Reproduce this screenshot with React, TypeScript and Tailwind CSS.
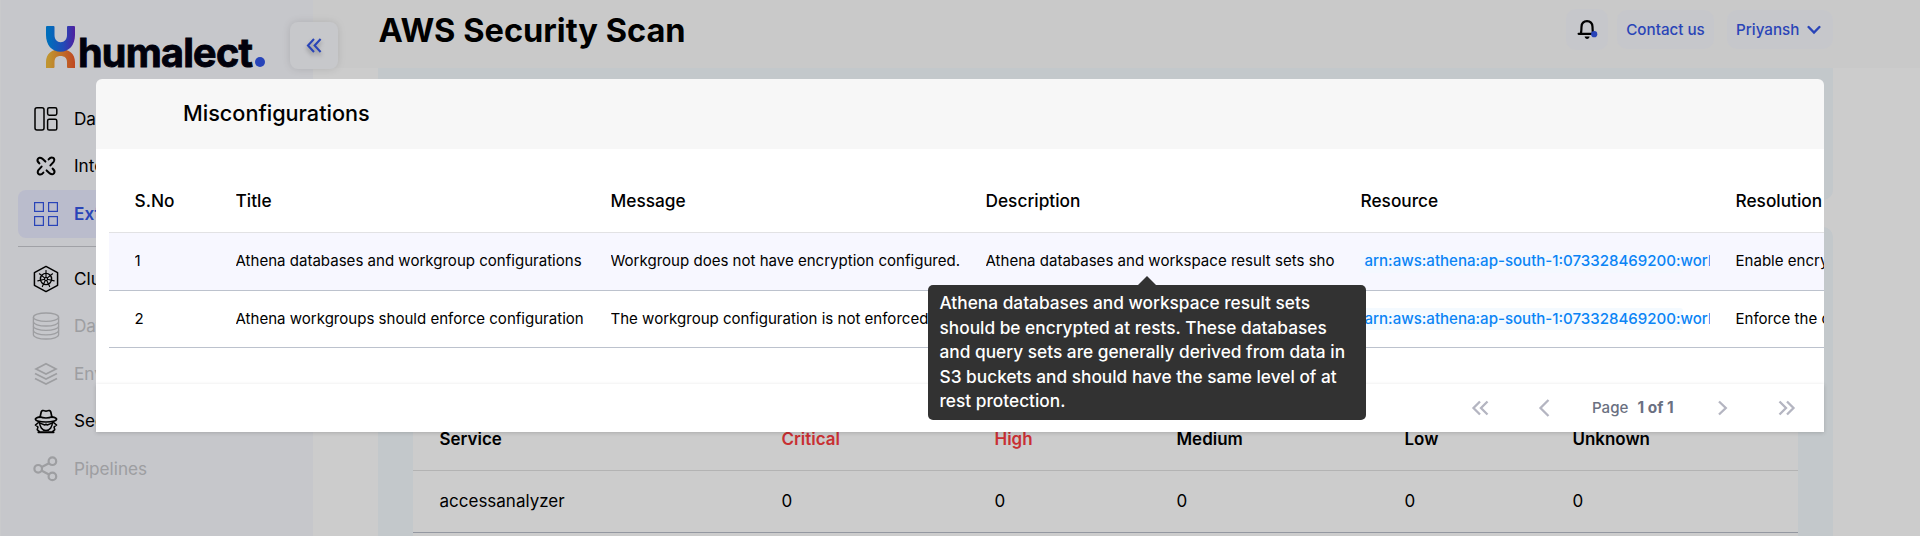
import type { ReactNode } from 'react';

type NavItem = { label: string; tone: string; icon: ReactNode };

const DashboardIcon = () => (
  <svg width="28" height="28" viewBox="0 0 28 28" fill="none" stroke="#000" strokeWidth="1.5">
    <rect x="3" y="2.8" width="9" height="22.2" rx="2" />
    <rect x="15.6" y="2.8" width="9.2" height="7.4" rx="1.6" />
    <rect x="15.6" y="14.2" width="9.2" height="10.8" rx="1.6" />
  </svg>
);

const HOOK = 'M-6.6 -2.6C-10.6 -5.8 -7.4 -10.2 -3.8 -7.4L-0.6 -4.4';
const IntegrationIcon = () => (
  <svg width="28" height="28" viewBox="-14 -14 28 28" fill="none" stroke="#000" strokeWidth="2" strokeLinecap="round">
    <path d={HOOK} />
    <path d={HOOK} transform="rotate(90)" />
    <path d={HOOK} transform="rotate(180)" />
    <path d={HOOK} transform="rotate(270)" />
  </svg>
);

const ExtensionIcon = () => (
  <svg width="28" height="28" viewBox="0 0 28 28" fill="none" stroke="#3456e6" strokeWidth="1.2">
    <rect x="2.6" y="2.6" width="8.8" height="8.8" />
    <rect x="16.6" y="2.6" width="8.8" height="8.8" />
    <rect x="2.6" y="16.6" width="8.8" height="8.8" />
    <rect x="16.6" y="16.6" width="8.8" height="8.8" />
  </svg>
);

const ClusterIcon = () => (
  <svg width="30" height="30" viewBox="-15 -15 30 30" fill="none" stroke="#000">
    <path strokeWidth="1.6" strokeLinejoin="round" d="M0 -13.5L12.4 -6.8V6.8L0 13.5L-12.4 6.8V-6.8Z" />
    <circle r="6" strokeWidth="1.5" />
    <circle r="1.8" strokeWidth="1" />
    <g strokeWidth="1.2" strokeLinecap="round">
      <path d="M0 -1.5V-9" />
      <path d="M0 -1.5V-9" transform="rotate(51.4)" />
      <path d="M0 -1.5V-9" transform="rotate(102.9)" />
      <path d="M0 -1.5V-9" transform="rotate(154.3)" />
      <path d="M0 -1.5V-9" transform="rotate(205.7)" />
      <path d="M0 -1.5V-9" transform="rotate(257.1)" />
      <path d="M0 -1.5V-9" transform="rotate(308.6)" />
    </g>
  </svg>
);

const DatabaseIcon = () => (
  <svg width="28" height="28" viewBox="0 0 28 28" fill="none" stroke="#c5c6ca" strokeWidth="1.3">
    <ellipse cx="14" cy="5.2" rx="12.6" ry="4.2" />
    <path d="M1.4 5.2V22.8C1.4 25.1 7 27 14 27S26.6 25.1 26.6 22.8V5.2" />
    <path d="M1.4 9.8C1.4 12.1 7 14 14 14S26.6 12.1 26.6 9.8" />
    <path d="M1.4 14.2C1.4 16.5 7 18.4 14 18.4S26.6 16.5 26.6 14.2" />
    <path d="M1.4 18.6C1.4 20.9 7 22.8 14 22.8S26.6 20.9 26.6 18.6" />
  </svg>
);

const LayersIcon = () => (
  <svg width="28" height="28" viewBox="0 0 28 28" fill="none" stroke="#c5c6ca" strokeWidth="1.7">
    <path d="M14 3.8L24 8.9L14 14L4 8.9Z" />
    <path d="M3 13.4L14 19L25 13.4" />
    <path d="M3 18.4L14 24L25 18.4" />
  </svg>
);

const SpyIcon = () => (
  <svg width="28" height="28" viewBox="0 0 28 28" fill="none" stroke="#000" strokeWidth="1.7" strokeLinejoin="round" strokeLinecap="round">
    <path d="M8 10.4L9.2 5C9.6 3.4 11 3.2 12.4 3.8C13.4 4.2 14.6 4.2 15.6 3.8C17 3.2 18.4 3.4 18.8 5L20 10.4" />
    <path d="M8 9.8C4.8 10.4 3.2 11.3 3.4 12.3C3.8 13.8 8.4 15 14 15S24.2 13.8 24.6 12.3C24.8 11.3 23.2 10.4 20 9.8C17 11.4 11 11.4 8 9.8Z" />
    <path strokeWidth="1.5" d="M7.6 14.8C7.4 19.5 10.2 23.6 14 23.6S20.6 19.5 20.4 14.8" />
    <path strokeWidth="1.5" d="M8.6 16.4L12.8 18L14 17.2L15.2 18L19.4 16.4" />
    <path strokeWidth="1.5" d="M6.4 15.6L3.4 18L6 20L5.2 22.6L7.4 24.6M21.6 15.6L24.6 18L22 20L22.8 22.6L20.6 24.6" />
    <path strokeWidth="1.9" d="M6.4 25.2H21.6" />
  </svg>
);

const PipelineIcon = () => (
  <svg width="28" height="28" viewBox="0 0 28 28" fill="none" stroke="#c5c6ca" strokeWidth="2.2">
    <circle cx="20.4" cy="6.2" r="3.8" />
    <circle cx="6.2" cy="13.8" r="3.8" />
    <circle cx="20.4" cy="21.4" r="3.8" />
    <path d="M9.8 12L17 8.2M9.8 15.7L17 19.5" />
  </svg>
);

const NAV_TOP: NavItem[] = [
  { label: 'Dashboard', tone: 'text-black', icon: <DashboardIcon /> },
  { label: 'Integrations', tone: 'text-black', icon: <IntegrationIcon /> },
  { label: 'Extensions', tone: 'bg-[#e9ebff] font-semibold text-[#3456e6]', icon: <ExtensionIcon /> },
];

const NAV_BOTTOM: NavItem[] = [
  { label: 'Clusters', tone: 'text-black', icon: <ClusterIcon /> },
  { label: 'Databases', tone: 'text-[#c5c6ca]', icon: <DatabaseIcon /> },
  { label: 'Environments', tone: 'text-[#c5c6ca]', icon: <LayersIcon /> },
  { label: 'Security', tone: 'text-black', icon: <SpyIcon /> },
  { label: 'Pipelines', tone: 'text-[#c5c6ca]', icon: <PipelineIcon /> },
];

const NavRow = ({ item }: { item: NavItem }) => (
  <li className={`flex h-[47.5px] items-center rounded-lg pl-[14px] text-[17.15px] ${item.tone}`}>
    <span className="flex w-[28px] justify-center">{item.icon}</span>
    <span className="ml-[14px]">{item.label}</span>
  </li>
);

const Logo = () => (
  <div className="flex h-[44px] items-start pl-[45px]">
    <svg className="mt-px" width="29" height="42" viewBox="0 0 29 42">
      <defs>
        <linearGradient id="top" x1="0" y1="0" x2="1" y2="0">
          <stop offset="0.1" stopColor="#0089ea" />
          <stop offset="0.6" stopColor="#2a5ee6" />
          <stop offset="1" stopColor="#6428c8" />
        </linearGradient>
        <linearGradient id="bottom" x1="0" y1="0" x2="1" y2="0">
          <stop offset="0.1" stopColor="#f0b93c" />
          <stop offset="1" stopColor="#ef5a2a" />
        </linearGradient>
      </defs>
      <path fill="url(#bottom)" d="M0 42V36C0 28 6 23 14.5 23S29 28 29 36V42Q29 42 28 42H22Q21 42 21 41V36C21 32 18.5 30 14.5 30S8.500 32 8.500 36V41Q8.500 42 7.500 42Z" />
      <path fill="url(#top)" d="M1 0H7.500Q8.500 0 8.500 1V9C8.500 13.500 11 16.200 14.700 16.200S21 13.500 21 9V1Q21 0 22 0H28Q29 0 29 1V9C29 19 23 25.800 14.500 25.800S0 19 0 9V1Q0 0 1 0Z" />
    </svg>
    <span className="ml-[3px] mt-[6px] text-[39.5px] font-bold leading-[44px] tracking-[-0.75px] text-[#02020f] [-webkit-text-stroke:0.9px_#02020f]">
      humalect
    </span>
    <span className="ml-[3px] mt-[32px] size-[10px] rounded-full bg-[#3156e8]" />
  </div>
);

const SERVICE_GRID = 'grid grid-cols-[342px_213px_182px_228px_168px_1fr] pl-[26.5px] items-center';

const COLS = 'grid grid-cols-[101px_375px_375px_375px_375px_375px] items-center';

const ROWS = [
  {
    title: 'Athena databases and workgroup configurations',
    message: 'Workgroup does not have encryption configured.',
    description: 'Athena databases and workspace result sets should be encrypted at rests.',
    resource: 'arn:aws:athena:ap-south-1:073328469200:workgroup/primary',
    resolution: 'Enable encryption at rest',
    tone: 'h-[58px] bg-[#f7f7ff]',
    mark: 'bg-[#f4f8ff]',
  },
  {
    title: 'Athena workgroups should enforce configuration',
    message: 'The workgroup configuration is not enforced.',
    description: 'Athena workgroup configuration should be enforced.',
    resource: 'arn:aws:athena:ap-south-1:073328469200:workgroup/primary',
    resolution: 'Enforce the configuration',
    tone: 'h-[57px] bg-white',
    mark: 'bg-[#f4faff]',
  },
];

const Cell = ({ children }: { children: ReactNode }) => (
  <div className="ml-[25.5px] overflow-hidden whitespace-nowrap">{children}</div>
);

const Chevron = ({ d, w }: { d: string; w: number }) => (
  <svg width={w} height="18" viewBox={`0 0 ${w} 18`} fill="none" stroke="#b4b5c1" strokeWidth="2.3">
    <path d={d} />
  </svg>
);

export default function App() {
  return (
    <div className="relative h-[536px] w-[1920px] overflow-hidden bg-white font-['Inter',sans-serif] text-black">
      <div className="flex h-full">
        <aside className="w-[313px] shrink-0 border-l border-[#fcfdff] bg-[#f8f9fe] pt-[25px]">
          <Logo />
          <ul className="ml-[17px] mr-[17px] mt-[26px]">
            {NAV_TOP.map((item) => (
              <NavRow key={item.label} item={item} />
            ))}
          </ul>
          <div className="ml-[17px] mr-[17px] mt-[8.500px] h-px bg-[#c9cad0]" />
          <ul className="ml-[17px] mr-[17px] mt-[8px]">
            {NAV_BOTTOM.map((item) => (
              <NavRow key={item.label} item={item} />
            ))}
          </ul>
        </aside>

        <main className="flex min-w-0 flex-1 flex-col">
          <header className="flex h-[68px] items-start bg-[#fcfcfc] pl-[65.500px] pr-[87px]">
            <h1 className="mt-[10px] text-[32.600px] font-bold leading-[40px]">AWS Security Scan</h1>
            <div className="ml-auto flex items-center pt-[9px] text-[15.200px] font-medium text-[#3456e6]">
              <span className="flex h-[41px] w-[42px] items-center justify-center rounded-[10px] bg-[#f8f9fe]">
                <svg width="22" height="24" viewBox="0 0 22 24" fill="none">
                  <path d="M2.600 15.800H19.400M4.800 15.600C5.600 13.500 5.300 11.400 5.500 8.800C5.700 5.200 8 3.200 11 3.200S16.300 5.200 16.500 8.800C16.700 11.400 16.400 13.500 17.200 15.600" stroke="#000" strokeWidth="2.200" strokeLinecap="round" />
                  <path d="M8.600 18.400H13.600C13.400 20 12.400 20.900 11.100 20.900S8.900 20 8.600 18.400Z" fill="#000" />
                  <circle cx="18.200" cy="16.200" r="3.100" fill="#3456e6" />
                </svg>
              </span>
              <span className="ml-[9px] flex h-[39px] w-[97px] items-center justify-center rounded-[10px] bg-[#f8f9fe] pt-[2px]">Contact us</span>
              <span className="ml-[13px] flex h-[39px] w-[106px] items-center rounded-[10px] bg-[#f8f9fe] pl-[9px] pt-[2px]">
                Priyansh
                <svg className="-mt-[2px] ml-[8px]" width="14" height="10" viewBox="0 0 14 10" fill="none" stroke="#3456e6" strokeWidth="2.400" strokeLinecap="round">
                  <path d="M1.600 2L7 7.600L12.400 2" />
                </svg>
              </span>
            </div>
          </header>
          <section className="ml-[65px] mr-[87px] h-[132px] rounded-b-[10px] bg-[#f4fafe]" />
          <section className="ml-[65px] mr-[87px] mt-[27px] flex-1 rounded-t-[10px] bg-[#f4fafe] px-[35px] pt-[35px]">
            <div className="h-full bg-white pt-[145px]">
              <div className={`h-[64px] border-b border-[#e0e0e0] pt-[3px] text-[16.950px] font-semibold ${SERVICE_GRID}`}>
                <span>Service</span>
                <span className="text-[#fa3b40]">Critical</span>
                <span className="text-[#fa3b40]">High</span>
                <span>Medium</span>
                <span>Low</span>
                <span>Unknown</span>
              </div>
              <div className={`h-[62px] border-b border-[#b9bfca] text-[17px] ${SERVICE_GRID}`}>
                <span>accessanalyzer</span>
                <span>0</span>
                <span>0</span>
                <span>0</span>
                <span>0</span>
                <span>0</span>
              </div>
            </div>
          </section>
        </main>
      </div>

      <button className="absolute left-[290px] top-[22px] flex h-[47px] w-[48px] items-center justify-center rounded-lg bg-[#f9fafe] shadow-[0_0_8px_rgba(0,0,0,0.12)]">
        <svg className="drop-shadow-[0_3px_2px_rgba(0,0,0,0.3)]" width="16" height="16" viewBox="0 0 16 16" fill="none" stroke="#3456e6" strokeWidth="2.100">
          <path d="M8 1L2 7.500L8 14M14.600 1L8.600 7.500L14.600 14" />
        </svg>
      </button>

      <div className="absolute inset-0 bg-black/20" />

      <div className="absolute left-[96px] top-[79px] flex h-[353px] w-[1728px] flex-col">
        <div className="flex h-[70px] shrink-0 items-center rounded-t-[6px] bg-[#f7f7f7] pl-[87px] text-[21.650px] font-medium">
          <span className="-mt-[2px]">Misconfigurations</span>
        </div>
        <div className="flex-1 overflow-hidden bg-white pl-[13px] pt-[20px]">
          <div className={`h-[64px] w-[1976px] border-b border-[#e2e2e4] text-[17.300px] font-medium ${COLS}`}>
            {['S.No', 'Title', 'Message', 'Description', 'Resource', 'Resolution'].map((h) => (
              <Cell key={h}>{h}</Cell>
            ))}
          </div>
          {ROWS.map((r, i) => (
            <div key={r.title} className={`w-[1976px] border-b border-[#bcc2cd] text-[15.050px] ${COLS} ${r.tone}`}>
              <Cell>{i + 1}</Cell>
              <Cell>{r.title}</Cell>
              <Cell>{r.message}</Cell>
              <Cell>{r.description}</Cell>
              <Cell>
                <div className={`flex h-[22px] w-[322px] items-center rounded-[3px] pl-[4px] font-medium text-[#0a84f5] ${r.mark}`}>
                  {r.resource}
                </div>
              </Cell>
              <Cell>{r.resolution}</Cell>
            </div>
          ))}
        </div>
        <footer className="flex h-[48px] shrink-0 items-center bg-white pl-[1375px] text-[15.100px] text-[#6a7081] shadow-[0_1px_4px_rgba(0,0,0,0.16)]">
          <Chevron w={18} d="M9 2.500L2.500 9L9 15.500M16.500 2.500L10 9L16.500 15.500" />
          <span className="ml-[49px] flex">
            <Chevron w={12} d="M10.500 1L2.500 9L10.500 17" />
          </span>
          <span className="ml-[42px] font-medium">Page</span>
          <span className="ml-[9px] text-[15.400px] font-bold">1 of 1</span>
          <span className="ml-[43px] flex">
            <Chevron w={12} d="M2 2.500L8.800 9L2 15.500" />
          </span>
          <span className="ml-[49px] flex">
            <Chevron w={18} d="M1.500 2.500L8 9L1.500 15.500M9 2.500L15.500 9L9 15.500" />
          </span>
        </footer>
      </div>

      <div className="absolute left-[928px] top-[276px] flex w-[438px] flex-col items-center">
        <svg width="18" height="9" viewBox="0 0 18 9">
          <path d="M0 9L9 0L18 9Z" fill="#323232" />
        </svg>
        <div className="h-[135px] w-full rounded-[5px] bg-[#323232] pl-[11.500px] pt-[6px] text-[17.300px] font-medium leading-[24.600px] text-white">
          Athena databases and workspace result sets
          <br />
          should be encrypted at rests. These databases
          <br />
          and query sets are generally derived from data in
          <br />
          S3 buckets and should have the same level of at
          <br />
          rest protection.
        </div>
      </div>
    </div>
  );
}
